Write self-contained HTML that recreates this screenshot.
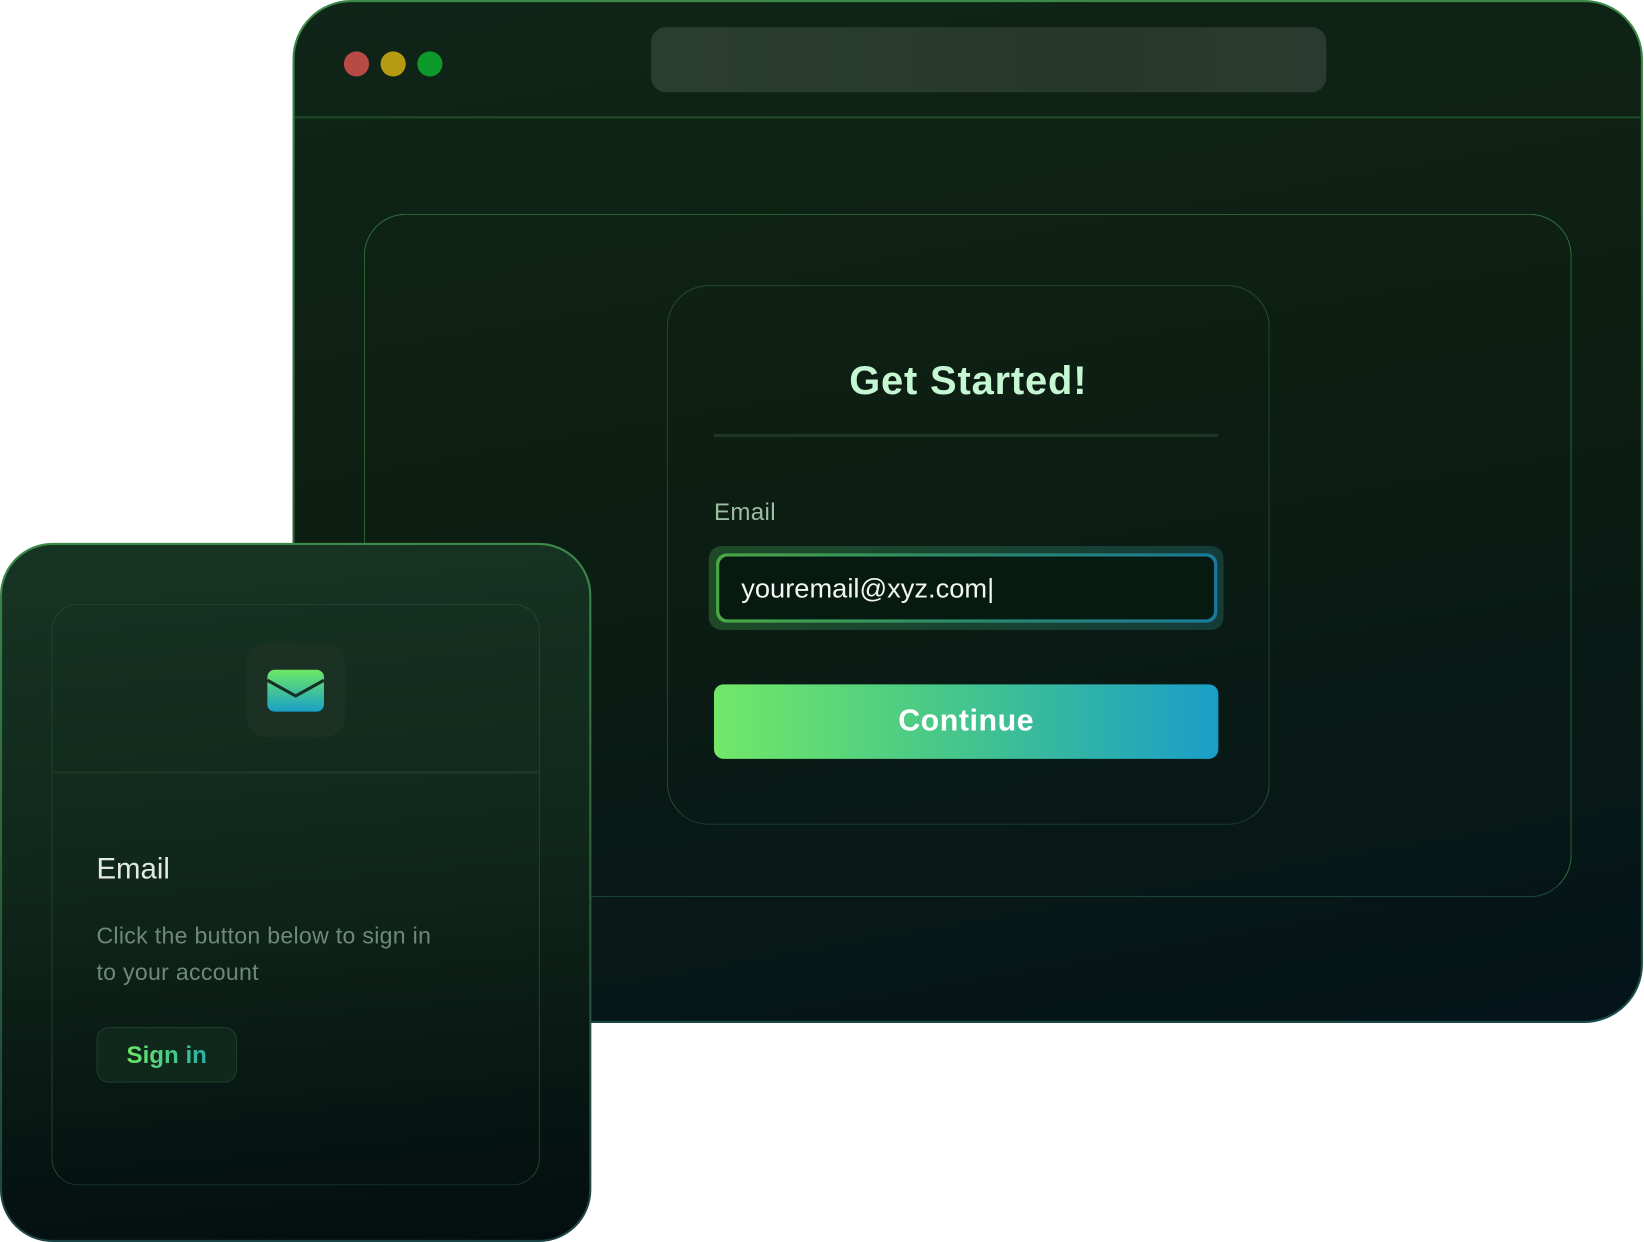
<!DOCTYPE html>
<html><head><meta charset="utf-8"><style>
html,body{margin:0;padding:0;background:#fff;width:1644px;height:1242px;overflow:hidden}
#s{position:absolute;left:0;top:0;width:1568px;height:1185px;transform-origin:0 0;transform:scale(1.04847,1.0481);font-family:"Liberation Sans",sans-serif}
.a{position:absolute;box-sizing:border-box}
</style></head><body><div id="s">
<div class="a" style="left:279px;top:0;width:1288px;height:976px;border-radius:56px;padding:2px;background:linear-gradient(180deg,#3c8a48,#2a5a3a 60%,#1b4a4a)">
 <div style="width:100%;height:100%;border-radius:54px;background:linear-gradient(170deg,#0f2518 0%,#0d1f12 40%,#071817 80%,#041419 100%);position:relative;overflow:hidden">
  <div class="a" style="left:0;right:0;top:109px;height:2px;background:#1f4a28"></div>
  <div class="a" style="left:47px;top:47px;width:24px;height:24px;border-radius:50%;background:#b84a46"></div>
  <div class="a" style="left:82px;top:47px;width:24px;height:24px;border-radius:50%;background:#b59a12"></div>
  <div class="a" style="left:117px;top:47px;width:24px;height:24px;border-radius:50%;background:#0e9a2a"></div>
  <div class="a" style="left:340px;top:24px;width:644px;height:62px;border-radius:14px;background:linear-gradient(90deg,#2a3e30,#27392a 60%,#2a3a30)"></div>
 </div>
</div>
<div class="a" style="left:347px;top:204px;width:1152px;height:652px;border-radius:40px;border:1.5px solid #2e6a3a;border-bottom-color:#1d4a3a"></div>
<div class="a" style="left:636px;top:272px;width:575px;height:515px;border-radius:40px;border:1.5px solid #234a2e;border-bottom-color:#1a3a34"></div>
<div class="a" style="left:636px;top:338px;width:575px;text-align:center;font-size:38px;font-weight:bold;color:#c6f7d3;line-height:52px;letter-spacing:0.8px">Get Started!</div>
<div class="a" style="left:681px;top:414px;width:481px;height:3px;background:#1e3424"></div>
<div class="a" style="left:681px;top:473px;font-size:23px;color:#9bbda4;line-height:30px;letter-spacing:0.3px">Email</div>
<div class="a" style="left:676px;top:521px;width:491px;height:80px;border-radius:12px;background:linear-gradient(90deg,#1f4a28,#143d3a)"></div>
<div class="a" style="left:683px;top:528px;width:478px;height:66px;border-radius:10px;padding:3px;background:linear-gradient(90deg,#4aa844,#2a8a6a,#1a7a9a)">
 <div style="width:100%;height:100%;border-radius:8px;background:#071a12"></div></div>
<div class="a" style="left:707px;top:544px;font-size:26px;color:#f2f5f2;line-height:34px">youremail@xyz.com<span style="font-weight:100">|</span></div>
<div class="a" style="left:681px;top:653px;width:481px;height:71px;border-radius:9px;background:linear-gradient(90deg,#72e868,#48c888 45%,#1a9ec8);color:#fff;font-weight:bold;font-size:29px;text-align:center;line-height:71px;letter-spacing:0.5px">Continue</div>
<div class="a" style="left:0;top:518px;width:564px;height:667px;border-radius:50px;padding:2px;background:linear-gradient(180deg,#3c8a48,#2a5a3a 55%,#1b4444)">
 <div style="width:100%;height:100%;border-radius:48px;background:linear-gradient(175deg,#163424 0%,#10271b 45%,#071612 80%,#040e0f 100%)"></div>
</div>
<div class="a" style="left:49px;top:576px;width:466px;height:555px;border-radius:26px;border:1.5px solid #22442c;border-bottom-color:#163530"></div>
<div class="a" style="left:50px;top:736px;width:464px;height:2px;background:#1d3a26"></div>
<div class="a" style="left:235px;top:613px;width:94px;height:90px;border-radius:18px;background:#1b3124"></div>
<svg class="a" style="left:254px;top:638px" width="56" height="42" viewBox="0 0 56 42">
 <defs><linearGradient id="g" x1="0" y1="0" x2="0" y2="1"><stop offset="0" stop-color="#6ee866"/><stop offset="1" stop-color="#1aa0c8"/></linearGradient></defs>
 <rect x="1" y="1" width="54" height="40" rx="7" fill="url(#g)"/>
 <path d="M1 11 L28 26 L55 11" fill="none" stroke="#163024" stroke-width="3"/>
</svg>
<div class="a" style="left:92px;top:810px;font-size:28px;color:#e2e8e3;line-height:38px">Email</div>
<div class="a" style="left:92px;top:875px;width:330px;font-size:22px;color:#6e8a77;line-height:35px;letter-spacing:0.3px">Click the button below to sign in to your account</div>
<div class="a" style="left:92px;top:980px;width:134px;height:53px;border-radius:12px;background:#10271b;border:1.5px solid #1f3e2c;text-align:center;line-height:50px;font-size:23px;font-weight:bold"><span style="background:linear-gradient(90deg,#6ee866,#2ab0a8);-webkit-background-clip:text;background-clip:text;color:transparent">Sign in</span></div>
</div></body></html>
